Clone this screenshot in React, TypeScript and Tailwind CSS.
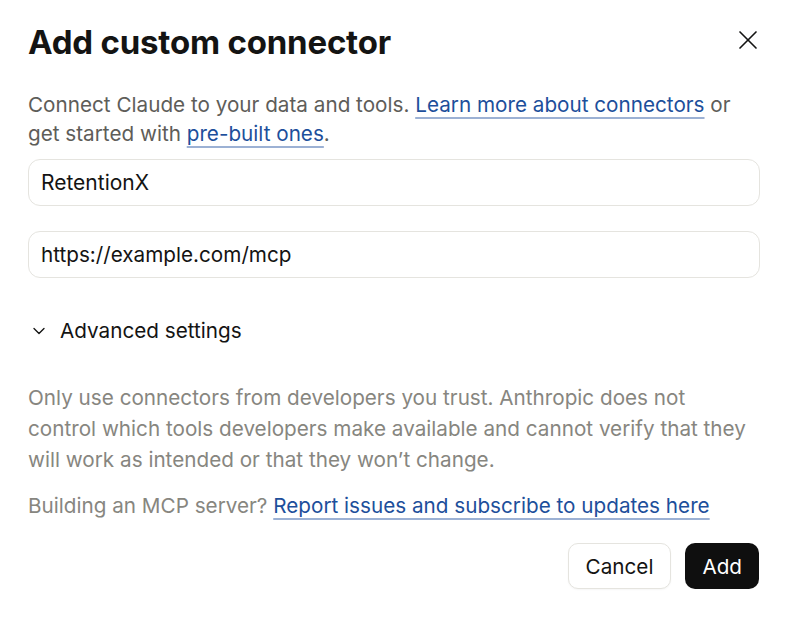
import { X, ChevronDown } from "lucide-react";

const font = { fontFamily: "Inter, 'Noto Sans', sans-serif" };

const linkCls =
  "text-[#1d4f9b] underline decoration-2 decoration-[#9cb1d4] underline-offset-[5px]";

export default function App() {
  return (
    <div
      className="w-[788px] h-[622px] bg-white px-[28px] pt-[22px] text-[#141413]"
      style={font}
    >
      <div className="flex items-start justify-between">
        <h1 className="text-[33px] leading-[40px] font-bold tracking-[-0.2px]">
          Add custom connector
        </h1>
        <button className="mt-[2px] mr-[-4px] text-[#141413]">
          <X className="h-[32px] w-[32px]" strokeWidth={1.25} />
        </button>
      </div>

      <p className="mt-[28px] text-[20.7px] leading-[29px] text-[#5e5d59]">
        Connect Claude to your data and tools.{" "}
        <a className={linkCls}>Learn more about connectors</a> or get started
        with <a className={linkCls}>pre-built ones</a>.
      </p>

      <div className="mt-[11px] flex flex-col gap-[25px]">
        <div className="h-[47px] rounded-[12px] border border-[#e5e4df] flex items-center px-[12px] text-[21px] text-[#141413]">
          RetentionX
        </div>
        <div className="h-[47px] rounded-[12px] border border-[#e5e4df] flex items-center px-[12px] text-[20.7px] text-[#141413]">
          https://example.com/mcp
        </div>
      </div>

      <div className="mt-[37px] flex items-center gap-[11px] text-[20.7px] text-[#141413]">
        <ChevronDown className="h-[20px] w-[20px] ml-[1px]" strokeWidth={1.6} />
        <span>Advanced settings</span>
      </div>

      <p className="mt-[36px] pr-[8px] text-[20.7px] leading-[31px] text-[#87867f]">
        Only use connectors from developers you trust. Anthropic does not
        control which tools developers make available and cannot verify that
        they will work as intended or that they won’t change.
      </p>

      <p className="mt-[15px] text-[20.7px] leading-[31px] text-[#87867f]">
        Building an MCP server?{" "}
        <a className={linkCls}>Report issues and subscribe to updates here</a>
      </p>

      <div className="mt-[22px] flex justify-end gap-[14px] pr-[1px]">
        <button className="h-[46px] px-[17px] rounded-[10px] border border-[#e5e4df] bg-white text-[20.7px] text-[#141413] shadow-[0_1px_2px_rgba(0,0,0,0.04)]">
          Cancel
        </button>
        <button className="h-[46px] px-[17px] rounded-[10px] bg-[#0f0f0f] text-[20.7px] text-white">
          Add
        </button>
      </div>
    </div>
  );
}
